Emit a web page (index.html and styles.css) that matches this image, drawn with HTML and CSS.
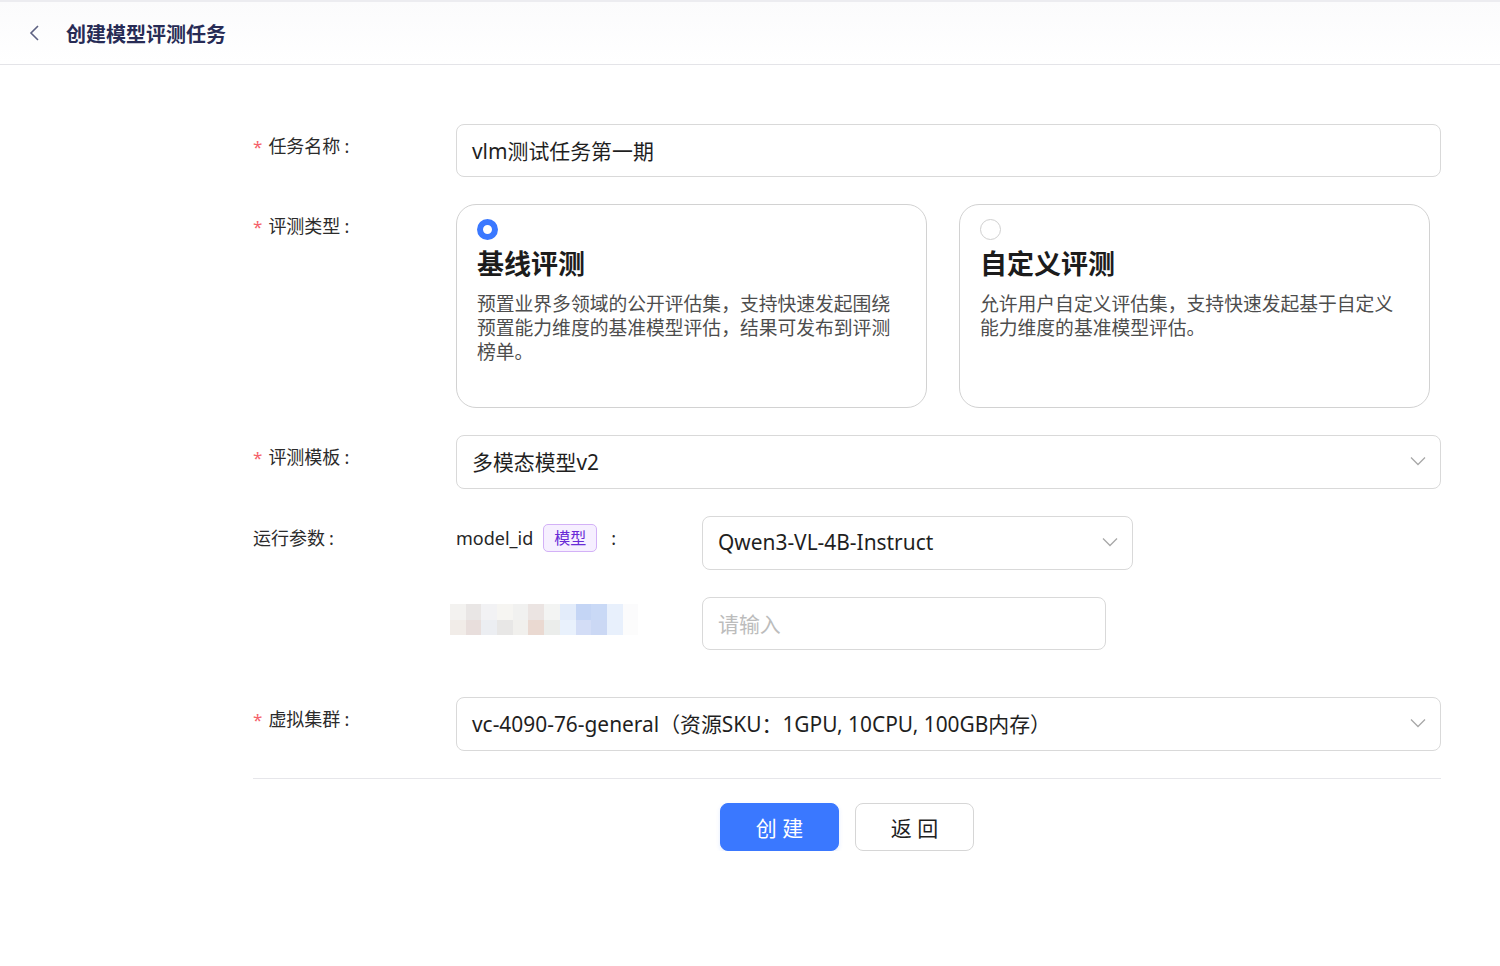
FILE: index.html
```html
<!DOCTYPE html>
<html lang="zh-CN">
<head>
  <meta charset="UTF-8">
  <meta name="viewport" content="width=device-width, initial-scale=1.0">
  <title>创建模型评测任务</title>
  <link rel="stylesheet" href="styles.css">
</head>
<body>
  <header class="topbar">
    <a class="back" href="javascript:void(0);">
      <svg width="14" height="18" viewBox="0 0 14 18"><path d="M10 2 L3 9 L10 16" fill="none" stroke="#5d6182" stroke-width="1.6"/></svg>
    </a>
    <h1>创建模型评测任务</h1>
  </header>

  <main class="form">
    <!-- 任务名称 -->
    <div class="row">
      <div class="label"><span class="req">*</span>任务名称<span class="sep">:</span></div>
      <div class="field">
        <div class="input">vlm测试任务第一期</div>
      </div>
    </div>

    <!-- 评测类型 -->
    <div class="row">
      <div class="label"><span class="req">*</span>评测类型<span class="sep">:</span></div>
      <div class="field cards">
        <div class="card">
          <span class="radio checked"></span>
          <div class="card-title">基线评测</div>
          <div class="card-desc">预置业界多领域的公开评估集，支持快速发起围绕预置能力维度的基准模型评估，结果可发布到评测榜单。</div>
        </div>
        <div class="card">
          <span class="radio"></span>
          <div class="card-title">自定义评测</div>
          <div class="card-desc">允许用户自定义评估集，支持快速发起基于自定义能力维度的基准模型评估。</div>
        </div>
      </div>
    </div>

    <!-- 评测模板 -->
    <div class="row">
      <div class="label"><span class="req">*</span>评测模板<span class="sep">:</span></div>
      <div class="field">
        <div class="input select">
          <span>多模态模型v2</span>
          <svg class="arrow" width="16" height="10" viewBox="0 0 16 10"><path d="M1 1.5 L8 8.5 L15 1.5" fill="none" stroke="#a8a8a8" stroke-width="1.3"/></svg>
        </div>
      </div>
    </div>

    <!-- 运行参数 -->
    <div class="row params-row">
      <div class="label plain">运行参数<span class="sep">:</span></div>
      <div class="field params">
        <div class="param">
          <div class="pname">
            <span>model_id</span>
            <span class="tag">模型</span>
            <span class="colon">:</span>
          </div>
          <div class="input select short">
            <span>Qwen3-VL-4B-Instruct</span>
            <svg class="arrow" width="16" height="10" viewBox="0 0 16 10"><path d="M1 1.5 L8 8.5 L15 1.5" fill="none" stroke="#a8a8a8" stroke-width="1.3"/></svg>
          </div>
        </div>
        <div class="param">
          <div class="pname">
            <div class="blur">
              <i style="background:#f3f2f0"></i><i style="background:#e9e6e5"></i><i style="background:#f2f2f4"></i><i style="background:#f6f5f2"></i><i style="background:#f1f1f0"></i><i style="background:#ebe4e2"></i><i style="background:#f3f4f3"></i><i style="background:#e3ecfa"></i><i style="background:#c4d5f5"></i><i style="background:#c9d9f6"></i><i style="background:#e8f0fc"></i><i style="background:#fbfbfc"></i>
              <i style="background:#f1ece8"></i><i style="background:#e8dedc"></i><i style="background:#eceef2"></i><i style="background:#e8e7e6"></i><i style="background:#f1f0ed"></i><i style="background:#ead9d1"></i><i style="background:#ebedeb"></i><i style="background:#e9f1fc"></i><i style="background:#d3ddf6"></i><i style="background:#cbd8f4"></i><i style="background:#e8f0fc"></i><i style="background:#fcfcfc"></i>
            </div>
          </div>
          <div class="input narrow placeholder">请输入</div>
        </div>
      </div>
    </div>

    <!-- 虚拟集群 -->
    <div class="row">
      <div class="label"><span class="req">*</span>虚拟集群<span class="sep">:</span></div>
      <div class="field">
        <div class="input select">
          <span>vc-4090-76-general（资源SKU：1GPU, 10CPU, 100GB内存）</span>
          <svg class="arrow" width="16" height="10" viewBox="0 0 16 10"><path d="M1 1.5 L8 8.5 L15 1.5" fill="none" stroke="#a8a8a8" stroke-width="1.3"/></svg>
        </div>
      </div>
    </div>

    <div class="divider"></div>

    <div class="actions">
      <button class="btn primary" type="button">创 建</button>
      <button class="btn" type="button">返 回</button>
    </div>
  </main>
</body>
</html>
```

FILE: styles.css
```css
body {
  margin: 0;
  font-family: "Noto Sans", "Noto Sans CJK SC", sans-serif;
  color: #262626;
  background-color: #fff;
}

.topbar {
  display: flex;
  align-items: center;
  height: 62px;
  padding-left: 28px;
  border-top: 2px solid #ececf0;
  border-bottom: 1px solid #e4e4e8;
  background: linear-gradient(#fbfbfc, #fff);
}

.back {
  display: flex;
  align-items: center;
  width: 38px;
}

.topbar h1 {
  margin: 0;
  font-size: 20px;
  font-weight: 700;
  color: #272b55;
}

.form {
  width: 1188px;
  margin: 59px 0 0 253px;
}

.row {
  display: flex;
  margin-bottom: 27px;
}

.label {
  width: 203px;
  flex-shrink: 0;
  padding-top: 8px;
  line-height: 28px;
  font-size: 18px;
  color: #2b2b2b;
}

.sep {
  margin-left: 4px;
}

.req {
  color: #f5626a;
  margin-right: 6px;
  font-size: 17px;
}

.field {
  flex: 1;
}

.input {
  display: flex;
  align-items: center;
  box-sizing: border-box;
  height: 53px;
  padding: 0 15px 2px;
  border: 1px solid #d9d9d9;
  border-radius: 8px;
  font-size: 20.9px;
  color: #1f1f1f;
}

.select {
  justify-content: space-between;
  height: 54px;
}

.select .arrow {
  margin-right: -1px;
}

.cards {
  display: flex;
  gap: 32px;
}

.card {
  box-sizing: border-box;
  width: 471px;
  height: 204px;
  padding: 14px 20px;
  border: 1px solid #d2d2d2;
  border-radius: 20px;
}

.radio {
  display: block;
  box-sizing: border-box;
  width: 21px;
  height: 21px;
  border: 1px solid #cfcfcf;
  border-radius: 50%;
}

.radio.checked {
  border: 6px solid #3a78ff;
}

.card-title {
  margin-top: 6px;
  font-size: 27px;
  line-height: 36px;
  font-weight: 700;
  color: #1c1c1c;
}

.card-desc {
  margin-top: 10px;
  font-size: 18.8px;
  line-height: 24px;
  color: #4d4d4d;
}

.params-row {
  margin-bottom: 47px;
}

.params {
  display: flex;
  flex-direction: column;
  gap: 27px;
}

.param {
  display: flex;
}

.pname {
  display: flex;
  align-items: flex-start;
  width: 246px;
  flex-shrink: 0;
  padding-top: 8px;
  line-height: 28px;
  font-size: 18px;
  color: #262626;
}

.tag {
  margin-left: 10px;
  padding: 0 10px;
  height: 26px;
  line-height: 26px;
  border: 1px solid #d3b1f7;
  border-radius: 5px;
  background-color: #f6efff;
  color: #6a2bd6;
  font-size: 16px;
}

.colon {
  margin-left: 14px;
}

.short {
  width: 431px;
}

.narrow {
  width: 404px;
}

.placeholder {
  color: #bcbcbc;
}

.blur {
  display: grid;
  grid-template-columns: repeat(12, 15.7px);
  grid-auto-rows: 15.5px;
  margin: -1px 0 0 -6px;
}

.divider {
  height: 1px;
  background-color: #e6e6ea;
  margin-top: 27px;
}

.actions {
  display: flex;
  justify-content: center;
  gap: 16px;
  margin-top: 24px;
}

.btn {
  width: 119px;
  height: 48px;
  border: 1px solid #d6d6d6;
  border-radius: 8px;
  background-color: #fff;
  font-family: inherit;
  font-size: 21px;
  color: #1f1f1f;
  cursor: pointer;
}

.btn.primary {
  border-color: #3a78ff;
  background-color: #3a78ff;
  color: #fff;
  box-shadow: 0 2px 4px rgba(58, 120, 255, 0.15);
}
```
